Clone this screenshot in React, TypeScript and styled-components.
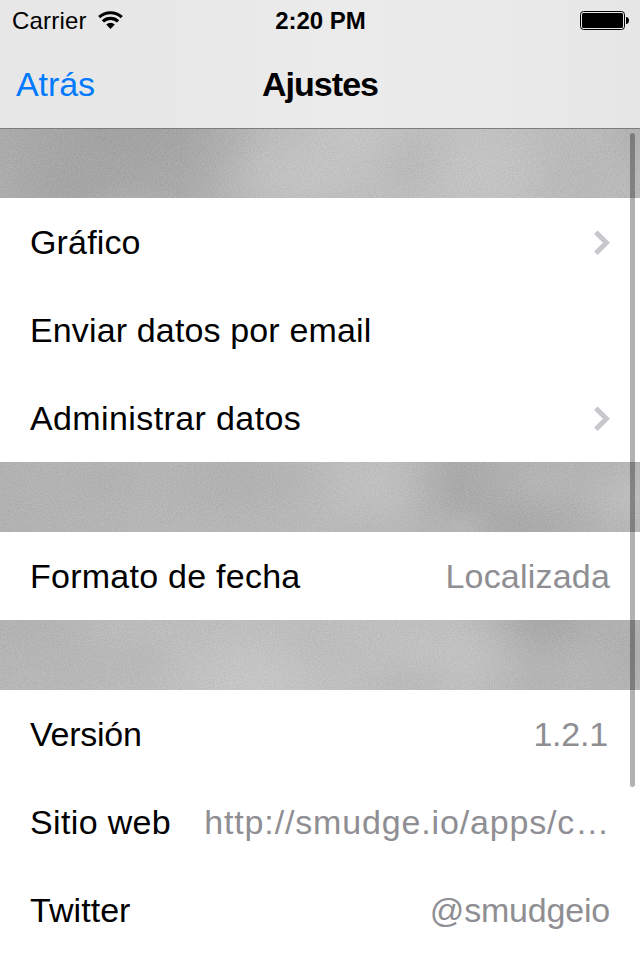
import React from 'react';
import styled, { createGlobalStyle } from 'styled-components';

const GlobalStyle = createGlobalStyle`
  html, body { margin: 0; padding: 0; overflow: hidden; background: #fff; }
  *, *::before, *::after { box-sizing: border-box; }
`;

const Screen = styled.main`
  position: relative;
  display: flex;
  flex-direction: column;
  width: 640px;
  height: 960px;
  overflow: hidden;
  background: #fff;
  color: #000;
  font-family: 'Liberation Sans', Arial, sans-serif;
  font-size: 34px;
`;

const Header = styled.header`
  flex: none;
  height: 129px;
  border-bottom: 1px solid #7d7d7d;
  background: linear-gradient(90deg, #e7e7e7 0, #e8e8e8 30%, #ebebeb 52%, #eaeaea 75%, #e6e6e6 100%);
`;

const StatusBar = styled.div`
  display: grid;
  grid-template-columns: 1fr auto 1fr;
  align-items: center;
  height: 40px;
  padding: 1px 11px 0 12px;
  font-size: 24px;
  line-height: 40px;
`;

const Carrier = styled.div`
  display: flex;
  align-items: center;
  gap: 11px;
`;

const Wifi = styled.svg`
  margin-top: -2px;
`;

const Battery = styled.svg`
  justify-self: end;
  margin-top: -1px;
`;

const NavBar = styled.nav`
  display: grid;
  grid-template-columns: 1fr auto 1fr;
  align-items: center;
  height: 88px;
  padding: 0 16px;
  line-height: 88px;
`;

const BackButton = styled.a`
  color: #007aff;
`;

const Text = styled.span<{ $track?: number }>`
  white-space: pre;
  letter-spacing: ${(p) => p.$track ?? 0}px;
`;

const StrongText = styled(Text)`
  font-weight: 700;
`;

const Group = styled.section`
  flex: none;
  background: #fff;
`;

const Row = styled.div`
  display: flex;
  align-items: center;
  justify-content: space-between;
  height: 88px;
  padding: 0 30px;
  line-height: 88px;
`;

const Value = styled(Text)<{ $inset?: number }>`
  margin-right: ${(p) => p.$inset ?? 0}px;
  color: #8e8e93;
`;

const Disclosure = styled.svg`
  margin-top: 2px;
`;

const Band = styled.div<{ $clouds: string; $height: number }>`
  position: relative;
  flex: none;
  height: ${(p) => p.$height}px;
  background: ${(p) => p.$clouds};
`;

const Grain = styled.svg`
  position: absolute;
  inset: 0;
  width: 100%;
  height: 100%;
  opacity: 0.1;
`;

const ScrollThumb = styled.div`
  position: absolute;
  top: 133px;
  right: 5px;
  width: 5px;
  height: 654px;
  border-radius: 2.5px;
  background: rgba(0, 0, 0, 0.3);
`;

/* A soft elliptical patch of grey: centre, radii and shade. */
const puff = (x: number, y: number, rx: number, ry: number, shade: number, alpha = 0.9) => {
  const stop = (k: number) => `rgba(${shade},${shade},${shade},${(alpha * k).toFixed(2)})`;
  return `radial-gradient(${rx}px ${ry}px at ${x}px ${y}px, ${stop(1)}, ${stop(0.75)} 30%, ${stop(0.25)} 70%, ${stop(0)})`;
};

const cloudsTop = [
  puff(130, 76, 60, 24, 178, 0.6),
  puff(75, 56, 95, 50, 162, 0.8),
  puff(112, 0, 160, 80, 158, 0.8),
  puff(355, 4, 80, 55, 201, 0.8),
  puff(310, 48, 100, 55, 200, 0.8),
  puff(405, 28, 55, 50, 182, 0.6),
  puff(330, 72, 50, 24, 182, 0.6),
  puff(490, 42, 100, 75, 200, 0.8),
  puff(555, 45, 60, 60, 180, 0.6),
  puff(640, 0, 50, 50, 174, 0.7),
  'linear-gradient(90deg, #aeaeae 0, #aaaaaa 28%, #bcbcbc 42%, #c0c0c0 75%, #bababa 100%)',
].join(',');

const cloudsMiddle = [
  puff(105, 20, 60, 36, 174, 0.5),
  puff(235, 14, 110, 70, 174, 0.7),
  puff(378, 22, 80, 75, 196, 0.8),
  puff(370, 66, 50, 28, 176, 0.5),
  puff(458, 68, 40, 28, 186, 0.7),
  puff(455, 22, 80, 80, 165, 0.8),
  puff(525, 64, 85, 44, 167, 0.8),
  puff(545, 26, 60, 36, 184, 0.6),
  puff(632, 36, 60, 46, 194, 0.8),
  'linear-gradient(90deg, #b2b2b2 0, #b7b7b7 25%, #bbbbbb 55%, #b2b2b2 80%, #b5b5b5 100%)',
].join(',');

const cloudsBottom = [
  puff(28, 8, 85, 48, 176, 0.6),
  puff(75, 48, 60, 42, 180, 0.5),
  puff(136, 44, 50, 36, 181, 0.5),
  puff(255, 62, 110, 65, 203, 0.8),
  puff(308, 35, 55, 48, 183, 0.5),
  puff(410, 66, 65, 36, 183, 0.6),
  puff(460, 42, 80, 70, 198, 0.8),
  puff(545, 0, 90, 48, 164, 0.8),
  puff(525, 48, 75, 50, 178, 0.6),
  puff(640, 30, 65, 70, 172, 0.7),
  'linear-gradient(90deg, #b7b7b7 0, #bebebe 25%, #c1c1c1 65%, #b7b7b7 82%, #b7b7b7 100%)',
].join(',');

const CloudBand = ({ clouds, height, seed }: { clouds: string; height: number; seed: number }) => (
  <Band $clouds={clouds} $height={height}>
    <Grain aria-hidden="true">
      <filter id={`grain-${seed}`} x="0" y="0" width="100%" height="100%" colorInterpolationFilters="sRGB">
        <feTurbulence type="fractalNoise" baseFrequency="0.73" numOctaves={2} seed={seed} />
        <feColorMatrix values="1 0 0 0 0.2  1 0 0 0 0.2  1 0 0 0 0.2  0 0 0 0 1" />
      </filter>
      <rect width="100%" height="100%" filter={`url(#grain-${seed})`} />
    </Grain>
  </Band>
);

const WifiIcon = () => (
  <Wifi width="25" height="18" viewBox="0 0 25 18" fill="none" stroke="#000" strokeWidth="3.1">
    <path d="M1.2 6.2A16.4 16.4 0 0 1 23.8 6.2" />
    <path d="M4.9 10.4A11 11 0 0 1 20.1 10.4" />
    <path d="M12.5 18L8.2 13.6A6.2 6.2 0 0 1 16.8 13.6Z" fill="#000" stroke="none" />
  </Wifi>
);

const BatteryIcon = () => (
  <Battery width="49" height="19" viewBox="0 0 49 19">
    <rect x="0.5" y="0.5" width="44" height="18" rx="3" fill="none" stroke="#000" />
    <rect x="2" y="2" width="41" height="15" rx="1.5" />
    <path d="M46 6C48 6.2 49 7.5 49 9.5S48 12.8 46 13Z" />
  </Battery>
);

const Chevron = () => (
  <Disclosure width="17" height="26" viewBox="0 0 17 26" fill="none" stroke="#c7c7cc" strokeWidth="5">
    <path d="M2.8 2.2L13.4 12.7L2.8 23.2" />
  </Disclosure>
);

export default function App() {
  return (
    <>
      <GlobalStyle />
      <Screen>
        <Header>
          <StatusBar>
            <Carrier>
              <Text $track={0.2}>Carrier</Text>
              <WifiIcon />
            </Carrier>
            <StrongText>2:20 PM</StrongText>
            <BatteryIcon />
          </StatusBar>
          <NavBar>
            <BackButton>
              <Text $track={-0.1}>Atrás</Text>
            </BackButton>
            <StrongText $track={-0.95}>Ajustes</StrongText>
          </NavBar>
        </Header>
        <CloudBand clouds={cloudsTop} height={69} seed={3} />
        <Group>
          <Row>
            <Text $track={0.15}>Gráfico</Text>
            <Chevron />
          </Row>
          <Row>
            <Text $track={0.14}>Enviar datos por email</Text>
          </Row>
          <Row>
            <Text $track={0.39}>Administrar datos</Text>
            <Chevron />
          </Row>
        </Group>
        <CloudBand clouds={cloudsMiddle} height={70} seed={8} />
        <Group>
          <Row>
            <Text $track={0.25}>Formato de fecha</Text>
            <Value $track={0.2}>Localizada</Value>
          </Row>
        </Group>
        <CloudBand clouds={cloudsBottom} height={70} seed={14} />
        <Group>
          <Row>
            <Text $track={-0.25}>Versión</Text>
            <Value $track={-0.2} $inset={2}>1.2.1</Value>
          </Row>
          <Row>
            <Text $track={0.35}>Sitio web</Text>
            <Value $track={0.84}>http://smudge.io/apps/c…</Value>
          </Row>
          <Row>
            <Text $track={0.05}>Twitter</Text>
            <Value $track={-0.2}>@smudgeio</Value>
          </Row>
        </Group>
        <ScrollThumb />
      </Screen>
    </>
  );
}
